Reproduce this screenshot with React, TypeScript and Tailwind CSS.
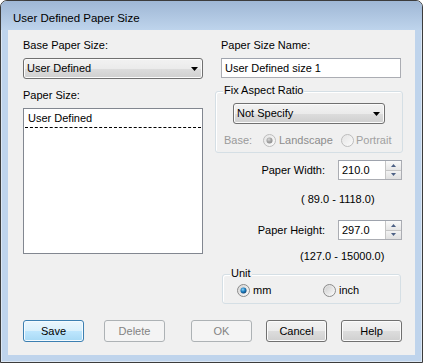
import React from 'react';

type RadioProps = { id: string; checked?: boolean; disabled?: boolean };

const Radio: React.FC<RadioProps> = ({ id, checked, disabled }) => (
  <svg width="13" height="13" viewBox="0 0 13 13" className="shrink-0">
    <defs>
      <linearGradient id={`${id}-o`} x1="0" y1="0" x2="1" y2="1">
        <stop offset="0" stopColor={disabled ? '#e4e4e4' : '#d8d8d8'} />
        <stop offset="1" stopColor="#fcfcfc" />
      </linearGradient>
      <linearGradient id={`${id}-i`} x1="0" y1="0" x2="1" y2="1">
        <stop offset="0" stopColor={disabled ? '#e6e6e6' : '#cfcfcf'} />
        <stop offset="1" stopColor="#f8f8f8" />
      </linearGradient>
      <radialGradient id={`${id}-d`} cx="0.4" cy="0.35" r="0.7">
        <stop offset="0" stopColor={disabled ? '#d8d8d8' : '#8fd4f8'} />
        <stop offset="0.5" stopColor={disabled ? '#a6a6a6' : '#1e7fc0'} />
        <stop offset="1" stopColor={disabled ? '#8c8c8c' : '#0c3d6e'} />
      </radialGradient>
    </defs>
    <circle cx="6.5" cy="6.5" r="6" fill={`url(#${id}-o)`} stroke={disabled ? '#bcbcbc' : '#8a8a8a'} />
    <circle cx="6.5" cy="6.5" r="4.3" fill={`url(#${id}-i)`} />
    {checked && <circle cx="6.5" cy="6.5" r="3" fill={`url(#${id}-d)`} />}
  </svg>
);

const ComboBox: React.FC<{ text: string; className?: string }> = ({ text, className }) => (
  <div
    className={`h-[21px] flex items-center justify-between pl-[3px] pr-[4px] border border-[#707070] rounded-[3px] bg-[linear-gradient(to_bottom,#f2f2f2_0%,#ebebeb_50%,#dddddd_50%,#cfcfcf_100%)] shadow-[inset_0_0_0_1px_#fbfbfb] ${className ?? ''}`}
  >
    <span>{text}</span>
    <svg width="7" height="4" viewBox="0 0 7 4">
      <path d="M0 0h7L3.5 4z" fill="#000" />
    </svg>
  </div>
);

const SpinBox: React.FC<{ value: string }> = ({ value }) => (
  <div className="w-[64px] h-[20px] flex border border-[#abadb3] border-t-[#9ea3ad] bg-white">
    <span className="flex-1 pl-[3px] leading-[18px]">{value}</span>
    <div className="w-[16px] flex flex-col border-l border-[#c5c5c5]">
      <div className="flex-1 flex items-center justify-center border-b border-[#c5c5c5] bg-[linear-gradient(to_bottom,#fafafa,#e6e6e6)]">
        <svg width="5" height="3" viewBox="0 0 5 3">
          <path d="M0 3h5L2.5 0z" fill="#4d6185" />
        </svg>
      </div>
      <div className="flex-1 flex items-center justify-center bg-[linear-gradient(to_bottom,#f2f2f2,#e0e0e0)]">
        <svg width="5" height="3" viewBox="0 0 5 3">
          <path d="M0 0h5L2.5 3z" fill="#4d6185" />
        </svg>
      </div>
    </div>
  </div>
);

type BtnKind = 'default' | 'normal' | 'disabled';

const Button: React.FC<{ label: string; kind: BtnKind; className?: string }> = ({ label, kind, className }) => {
  const look =
    kind === 'default'
      ? 'border-[#3c7fb1] bg-[linear-gradient(to_bottom,#eaf6fd_0%,#d9f0fc_50%,#bee6fd_50%,#a7d9f5_100%)] shadow-[inset_0_0_0_1px_#f4fbff]'
      : kind === 'disabled'
      ? 'border-[#adb2b5] bg-[#f4f4f4] text-[#838383]'
      : 'border-[#707070] bg-[linear-gradient(to_bottom,#f2f2f2_0%,#ebebeb_50%,#dddddd_50%,#cfcfcf_100%)] shadow-[inset_0_0_0_1px_#fbfbfb]';
  return (
    <div className={`w-[61px] h-[22px] flex items-center justify-center border rounded-[3px] ${look} ${className ?? ''}`}>
      {label}
    </div>
  );
};

const GroupBox: React.FC<{ title: string; className?: string; children: React.ReactNode }> = ({
  title,
  className,
  children,
}) => (
  <div className={`relative border border-[#d5dfe5] rounded-[3px] shadow-[inset_1px_1px_0_#ffffff] ${className ?? ''}`}>
    <span className="absolute -top-[9px] left-[7px] px-[1px] bg-[#f0f0f0] leading-[15px]">{title}</span>
    {children}
  </div>
);

const App: React.FC = () => {
  return (
    <div className="w-[423px] h-[363px] font-['Liberation_Sans',Arial,sans-serif] text-[11px] leading-[15px] text-black">
      <div className="h-full flex flex-col border border-[#3c3c3c] rounded-t-[7px] bg-[#bfd4ec] shadow-[inset_0_0_0_1px_rgba(255,255,255,0.45)] px-[7px] pb-[7px]">
        {/* title bar */}
        <div className="h-[29px] -mx-[7px] pl-[12px] pt-[10px] rounded-t-[6px] bg-[linear-gradient(to_bottom,#9fb7d5,#bed4ec)] text-[11.5px]">
          User Defined Paper Size
        </div>

        {/* client area */}
        <div className="flex-1 bg-[#f0f0f0]">
          <div className="flex pl-[15px]">
            {/* left column */}
            <div className="w-[180px] pt-[8px]">
              <div>Base Paper Size:</div>
              <ComboBox text="User Defined" className="mt-[5px] w-[180px]" />
              <div className="mt-[9px]">Paper Size:</div>
              <div className="mt-[5px] h-[146px] border border-[#828790] bg-white p-[1px]">
                <div className="h-[18px] pl-[3px] leading-[17px] border-b border-dashed border-black">User Defined</div>
              </div>
            </div>

            {/* right column */}
            <div className="w-[188px] ml-[12px] pt-[8px]">
              <div className="pl-[6px]">Paper Size Name:</div>
              <div className="mt-[5px] ml-[6px] w-[180px] h-[20px] pl-[3px] leading-[18px] border border-[#abadb3] border-t-[#9ea3ad] bg-white">
                User Defined size 1
              </div>

              <GroupBox title="Fix Aspect Ratio" className="mt-[13px] h-[62px] pt-[11px]">
                <ComboBox text="Not Specify" className="ml-[17px] w-[152px]" />
                <div className="mt-[9px] flex items-center pl-[8px] text-[#9a9a9a]">
                  <span className="w-[39px]">Base:</span>
                  <div className="w-[78px] flex items-center gap-[3px]">
                    <Radio id="land" checked disabled />
                    <span className="text-[#8d8d8d]">Landscape</span>
                  </div>
                  <div className="flex items-center gap-[2px]">
                    <Radio id="port" disabled />
                    <span className="text-[#a0a0a0]">Portrait</span>
                  </div>
                </div>
              </GroupBox>

              <div className="mt-[7px] flex items-center justify-end gap-[13px] pr-[1px]">
                <span>Paper Width:</span>
                <SpinBox value="210.0" />
              </div>
              <div className="mt-[12px] pl-[86px]">( 89.0 - 1118.0)</div>

              <div className="mt-[13px] flex items-center justify-end gap-[13px] pr-[1px]">
                <span>Paper Height:</span>
                <SpinBox value="297.0" />
              </div>
              <div className="mt-[9px] pl-[85px]">(127.0 - 15000.0)</div>

              <GroupBox title="Unit" className="mt-[10px] ml-[7px] w-[179px] h-[30px] pt-[7px]">
                <div className="h-[16px] flex items-center pl-[14px]">
                  <div className="w-[86px] flex items-center gap-[3px]">
                    <Radio id="mm" checked />
                    <span>mm</span>
                  </div>
                  <div className="flex items-center gap-[3px]">
                    <Radio id="inch" />
                    <span>inch</span>
                  </div>
                </div>
              </GroupBox>
            </div>
          </div>

          {/* buttons */}
          <div className="mt-[16px] flex pl-[15px]">
            <Button label="Save" kind="default" />
            <Button label="Delete" kind="disabled" className="ml-[20px]" />
            <Button label="OK" kind="disabled" className="ml-[26px]" />
            <Button label="Cancel" kind="normal" className="ml-[14px]" />
            <Button label="Help" kind="normal" className="ml-[14px]" />
          </div>
        </div>
      </div>
    </div>
  );
};

export default App;
